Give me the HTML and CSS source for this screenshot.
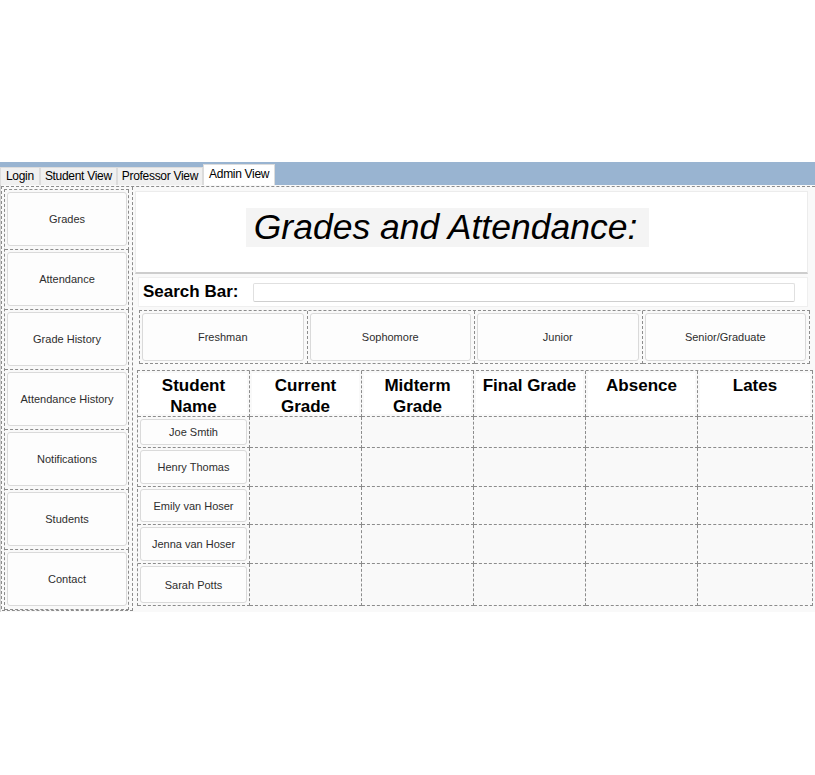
FILE: index.html
```html
<!DOCTYPE html>
<html>
<head>
<meta charset="utf-8">
<link rel="stylesheet" href="styles.css">
</head>
<body>
<div class="top-space"></div>
<div class="tabstrip">
  <div class="tab tab-first">Login</div>
  <div class="tab">Student View</div>
  <div class="tab">Professor View</div>
  <div class="tab tab-active">Admin View</div>
</div>
<div class="page">
  <div class="layout">
    <div class="navcell">
      <div class="nav">
        <div class="navitem"><div class="btn">Grades</div></div>
        <div class="navitem"><div class="btn">Attendance</div></div>
        <div class="navitem"><div class="btn">Grade History</div></div>
        <div class="navitem"><div class="btn">Attendance History</div></div>
        <div class="navitem"><div class="btn">Notifications</div></div>
        <div class="navitem"><div class="btn">Students</div></div>
        <div class="navitem"><div class="btn">Contact</div></div>
      </div>
    </div>
    <div class="maincell">
      <div class="title-box">
        <div class="title-label">Grades and Attendance:</div>
      </div>
      <div class="search-row">
        <span class="search-label">Search Bar:</span>
        <div class="search-input"></div>
      </div>
      <div class="years">
        <div class="yearcell"><div class="btn">Freshman</div></div>
        <div class="yearcell"><div class="btn">Sophomore</div></div>
        <div class="yearcell"><div class="btn">Junior</div></div>
        <div class="yearcell"><div class="btn">Senior/Graduate</div></div>
      </div>
      <div class="grid">
        <div class="cell"><div class="head">Student<br>Name</div></div>
        <div class="cell"><div class="head">Current<br>Grade</div></div>
        <div class="cell"><div class="head">Midterm<br>Grade</div></div>
        <div class="cell"><div class="head">Final Grade</div></div>
        <div class="cell"><div class="head">Absence</div></div>
        <div class="cell"><div class="head">Lates</div></div>

        <div class="cell"><div class="btn">Joe Smtih</div></div>
        <div class="cell"></div><div class="cell"></div><div class="cell"></div><div class="cell"></div><div class="cell"></div>

        <div class="cell"><div class="btn">Henry Thomas</div></div>
        <div class="cell"></div><div class="cell"></div><div class="cell"></div><div class="cell"></div><div class="cell"></div>

        <div class="cell"><div class="btn">Emily van Hoser</div></div>
        <div class="cell"></div><div class="cell"></div><div class="cell"></div><div class="cell"></div><div class="cell"></div>

        <div class="cell"><div class="btn">Jenna van Hoser</div></div>
        <div class="cell"></div><div class="cell"></div><div class="cell"></div><div class="cell"></div><div class="cell"></div>

        <div class="cell"><div class="btn">Sarah Potts</div></div>
        <div class="cell"></div><div class="cell"></div><div class="cell"></div><div class="cell"></div><div class="cell"></div>
      </div>
    </div>
  </div>
</div>
</body>
</html>
```
FILE: styles.css
```css
* { box-sizing: border-box; }
html, body { margin: 0; padding: 0; background: #ffffff; }
body {
  font-family: "Liberation Sans", Arial, sans-serif;
  width: 815px;
  overflow: hidden;
}
.top-space { height: 162px; }
.tabstrip {
  height: 23px;
  background: #99b4d1;
  display: flex;
  align-items: flex-end;
}
.tab {
  height: 18px;
  padding: 0 4px;
  background: #f0f0f0;
  border: 1px solid #dcdcdc;
  border-bottom: none;
  font-size: 12px;
  line-height: 17px;
  color: #000;
  letter-spacing: -0.3px;
  white-space: nowrap;
}
.tab-first { padding: 0 5px; }
.tab-active {
  height: 21px;
  line-height: 18px;
  background: #ffffff;
  padding: 0 5px;
}
.page {
  height: 427px;
  background: #f9f9f9;
  border-left: 1px solid #d0d0d0;
  padding: 1px 0 0 0;
}
.layout {
  display: grid;
  grid-template-columns: 131px 1fr;
  height: 423px;
  border-top: 1px dashed #8c8c8c;
  border-left: 1px dashed #8c8c8c;
}
.navcell {
  border-right: 1px dashed #8c8c8c;
  border-bottom: 1px dashed #8c8c8c;
  padding: 2px 2px 0 2px;
}
.nav {
  display: grid;
  grid-template-rows: repeat(7, 60px);
  border-top: 1px dashed #8c8c8c;
  border-left: 1px dashed #8c8c8c;
  width: 125px;
}
.navitem {
  border-right: 1px dashed #8c8c8c;
  border-bottom: 1px dashed #8c8c8c;
  padding: 2px 1px 3px 2px;
  display: flex;
}
.btn {
  flex: 1;
  background: #fdfdfd;
  border: 1px solid #dadada;
  border-radius: 3px;
  display: flex;
  align-items: center;
  justify-content: center;
  font-size: 11px;
  color: #2e2e2e;
  text-align: center;
}
.maincell {
  display: flex;
  flex-direction: column;
  align-items: flex-start;
}
.title-box {
  margin: 4px 0 0 2px;
  width: 673px;
  height: 83px;
  background: #ffffff;
  border: 1px solid #ececec;
  border-bottom: 2px solid #cdcdcd;
  padding: 16px 0 0 110px;
}
.title-label {
  width: 403px;
  height: 39px;
  background: #f4f4f4;
  font-style: italic;
  font-size: 35.5px;
  line-height: 39px;
  text-align: center;
  color: #000;
  white-space: nowrap;
  padding-right: 4px;
}
.search-row {
  margin: 3px 0 0 5px;
  width: 670px;
  height: 30px;
  background: #ffffff;
  border: 1px solid #efefef;
  display: flex;
  align-items: center;
  padding-left: 4px;
}
.search-label {
  font-weight: bold;
  font-size: 17px;
  color: #000;
  width: 110px;
}
.search-input {
  width: 542px;
  height: 19px;
  background: #ffffff;
  border: 1px solid #e0e0e0;
  border-bottom-color: #cfcfcf;
  border-radius: 2px;
}
.years {
  margin: 3px 0 0 6px;
  width: 671px;
  height: 54px;
  display: grid;
  grid-template-columns: repeat(4, 1fr);
  border-top: 1px dashed #8c8c8c;
  border-left: 1px dashed #8c8c8c;
}
.yearcell {
  border-right: 1px dashed #8c8c8c;
  border-bottom: 1px dashed #8c8c8c;
  padding: 2px 3px 2px 2px;
  display: flex;
}
.grid {
  margin: 6px 0 0 4px;
  width: 676px;
  display: grid;
  grid-template-columns: 112px 112px 112px 112px 112px 1fr;
  grid-template-rows: 46px 31px 39px 38px 39px 42px;
  border-top: 1px dashed #8c8c8c;
  border-left: 1px dashed #8c8c8c;
}
.cell {
  border-right: 1px dashed #8c8c8c;
  border-bottom: 1px dashed #8c8c8c;
  padding: 2px 2px 2px 2px;
  display: flex;
}
.head {
  flex: 1;
  background: #ffffff;
  font-weight: bold;
  font-size: 17px;
  line-height: 21px;
  text-align: center;
  color: #000;
  padding-top: 2px;
}
```
